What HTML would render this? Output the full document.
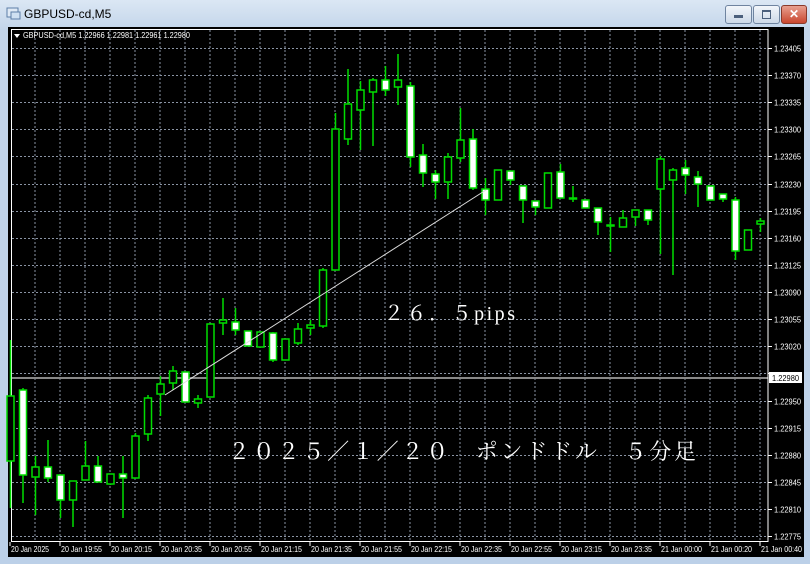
<!DOCTYPE html>
<html><head><meta charset="utf-8"><style>
html,body{margin:0;padding:0;background:#c5d7ec;width:810px;height:564px;overflow:hidden;font-family:"Liberation Sans",sans-serif}
#win{position:absolute;left:0;top:0;width:810px;height:564px;background:linear-gradient(#dbe7f4,#c3d5ea 30px,#bcd0e8)}
#title{position:absolute;left:24px;top:7px;font-size:12px;color:#000}
.btn{position:absolute;top:5px;height:17px;border:1px solid #6f84a0;border-radius:3px;background:linear-gradient(#f2f6fb,#cdd9e8)}
svg{position:absolute;left:0;top:0}
</style></head><body><div id="win">
<svg width="16" height="14" style="left:6px;top:7px"><rect x="1" y="1" width="11" height="9" fill="#dfe9f5" stroke="#5c7ea8"/><rect x="5" y="5" width="9" height="7" fill="#cfe0f2" stroke="#5c7ea8"/></svg>
<div id="title">GBPUSD-cd,M5</div>
<div class="btn" style="left:725px;width:25px"><div style="position:absolute;left:8px;top:9px;width:9px;height:3px;background:#4b5f7c"></div></div>
<div class="btn" style="left:753px;width:25px"><div style="position:absolute;left:8px;top:4px;width:7px;height:6px;border:1px solid #4b5f7c;border-top-width:2px"></div></div>
<div class="btn" style="left:781px;width:24px;background:linear-gradient(#e8a08f,#c9472f);border-color:#8a3a2a;color:#fff;font-size:12px;font-weight:bold;text-align:center;line-height:17px">✕</div>
<svg id="c" width="810" height="564"></svg>
</div>
<script>
var s='';
s+='<rect x="8" y="27" width="796" height="530" fill="#000"/>';
for(var x=35;x<768;x+=25)s+='<line x1="'+x+'" y1="30" x2="'+x+'" y2="541" stroke="#8a94a4" stroke-dasharray="2,2"/>';
var prices=['1.23405','1.23370','1.23335','1.23300','1.23265','1.23230','1.23195','1.23160','1.23125','1.23090','1.23055','1.23020','','1.22950','1.22915','1.22880','1.22845','1.22810','1.22775'];
for(var k=0;k<19;k++){var y=Math.round(48+27.12*k)+0.5;s+='<line x1="12" y1="'+y+'" x2="768" y2="'+y+'" stroke="#8a94a4" stroke-dasharray="2,2"/>';
s+='<line x1="768" y1="'+y+'" x2="772" y2="'+y+'" stroke="#fff"/>';
if(prices[k])s+='<text x="774" y="'+(y+3)+'" fill="#fff" font-size="8" textLength="27" lengthAdjust="spacingAndGlyphs">'+prices[k]+'</text>';}
s+='<line x1="12" y1="378" x2="768" y2="378" stroke="#888" stroke-width="2"/>';
s+='<rect x="769" y="372" width="33" height="11" fill="#fff"/><text x="772" y="381" font-size="8" fill="#000" textLength="27" lengthAdjust="spacingAndGlyphs">1.22980</text>';
s+='<rect x="11.5" y="29.5" width="756.5" height="512" fill="none" stroke="#fff"/>';
var t=['20 Jan 2025','20 Jan 19:55','20 Jan 20:15','20 Jan 20:35','20 Jan 20:55','20 Jan 21:15','20 Jan 21:35','20 Jan 21:55','20 Jan 22:15','20 Jan 22:35','20 Jan 22:55','20 Jan 23:15','20 Jan 23:35','21 Jan 00:00','21 Jan 00:20','21 Jan 00:40'];
for(var i=0;i<16;i++){var x=10+50*i;s+='<line x1="'+x+'" y1="542" x2="'+x+'" y2="546" stroke="#fff"/><text x="'+(x+1)+'" y="552" fill="#fff" font-size="8" textLength="'+(i==0?38:41)+'" lengthAdjust="spacingAndGlyphs">'+t[i]+'</text>';}
var C=[[0,340,396,461,508,0],[1,388,390,475,503,1],[2,456,467,477,515,0],[3,440,467,478,482,1],[4,475,475,500,518,1],[5,481,481,500,527,0],[6,441,466,480,480,0],[7,456,466,482,482,1],[8,474,474,484,485,0],[9,456,474,478,518,1],
[10,433,436,478,478,0],[11,395,398,434,441,0],[12,376,384,394,416,0],[13,366,371,383,390,0],[14,372,372,402,402,1],[15,395,399,403,408,0],[16,323,324,397,397,0],[17,298,320,323,335,0],[18,308,322,330,335,1],[19,331,331,346,346,1],
[20,332,332,347,347,0],[21,332,333,360,362,1],[22,339,339,360,360,0],[23,323,329,343,345,0],[24,320,325,328,335,0],[25,268,270,326,328,0],[26,113,129,270,270,0],[27,69,104,139,145,0],[28,81,90,110,150,0],[29,78,80,92,146,0],
[30,66,80,90,96,1],[31,54,80,87,105,0],[32,82,86,157,167,1],[33,144,155,173,187,1],[34,170,174,182,199,1],[35,153,157,182,199,0],[36,108,140,158,162,0],[37,129,139,188,190,1],[38,178,189,200,215,1],[39,170,170,200,200,0],
[40,171,171,180,185,1],[41,186,186,200,223,1],[42,201,201,207,215,1],[43,173,173,208,208,0],[44,164,172,198,198,1],[45,186,198,199,202,1],[46,200,200,208,208,1],[47,208,208,222,235,1],[48,217,225,226,252,0],[49,210,218,227,227,0],
[50,210,210,217,226,0],[51,210,210,220,225,1],[52,156,159,189,254,0],[53,168,170,180,275,0],[54,160,168,175,194,1],[55,171,177,184,207,1],[56,186,186,200,200,1],[57,194,194,199,202,1],[58,197,200,251,260,1],[59,230,230,250,250,0],[60,218,221,224,232,0]];
C.forEach(function(c){var x=10.5+12.5*c[0];
s+='<line x1="'+x+'" y1="'+c[1]+'" x2="'+x+'" y2="'+c[4]+'" stroke="#00dd00" stroke-width="1.5"/>';
s+='<rect x="'+(x-3.5)+'" y="'+c[2]+'" width="7" height="'+Math.max(1,c[3]-c[2])+'" fill="'+(c[5]?'#fff':'#000')+'" stroke="#00dd00" stroke-width="1.5"/>';});
s+='<line x1="165" y1="395" x2="486" y2="190" stroke="#ddd" stroke-width="1"/>';
s+='<path d="M14 34 L20 34 L17 38 Z" fill="#fff"/><text x="23" y="38" fill="#fff" font-size="8" textLength="167" lengthAdjust="spacingAndGlyphs">GBPUSD-cd,M5  1.22966 1.22981 1.22961 1.22980</text>';
s+='<text x="384" y="320" fill="#fff" font-size="20" font-family="Liberation Serif,Noto Serif CJK SC,serif" textLength="131" lengthAdjust="spacing">２６．５pips</text>';
s+='<text x="228" y="459" fill="#fff" font-size="22" font-family="Liberation Serif,Noto Serif CJK SC,serif" textLength="468" lengthAdjust="spacing">２０２５／１／２０　ポンドドル　５分足</text>';
document.getElementById('c').innerHTML=s;
</script>
</body></html>
